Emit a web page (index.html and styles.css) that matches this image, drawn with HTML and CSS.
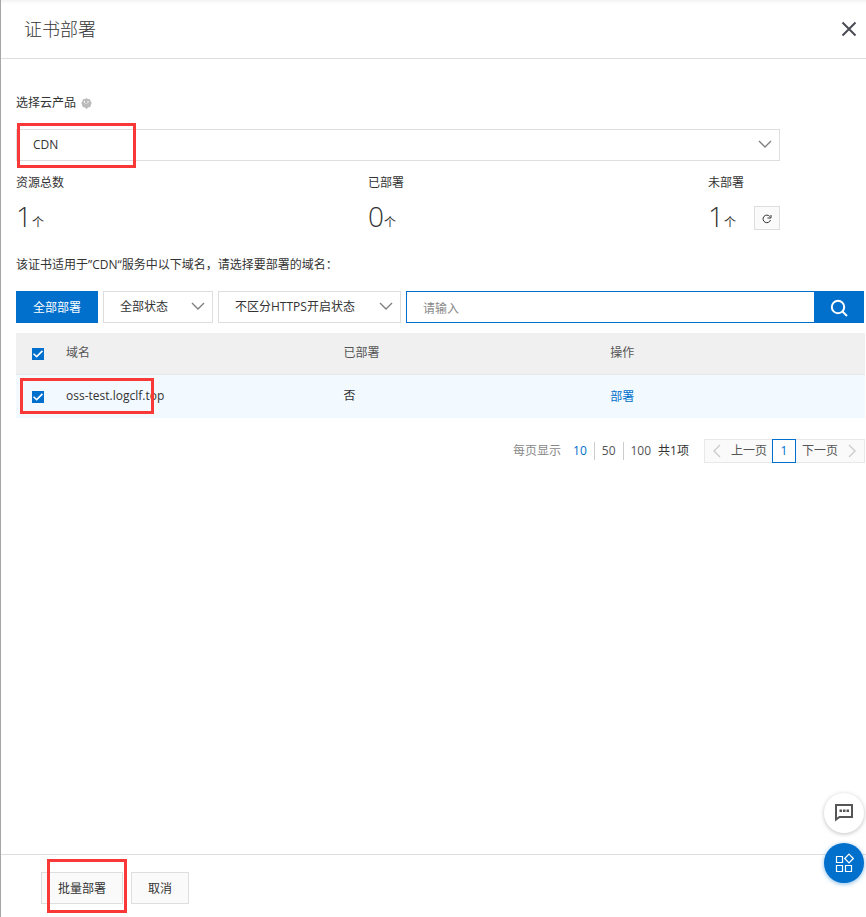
FILE: index.html
```html
<!DOCTYPE html>
<html lang="zh-CN">
<head>
<meta charset="utf-8">
<meta name="viewport" content="width=device-width, initial-scale=1">
<title>证书部署</title>
<link rel="stylesheet" href="styles.css">
</head>
<body>
<div class="drawer">
  <header class="drawer-header">
    <h1 class="drawer-title">证书部署</h1>
    <button class="close" type="button" aria-label="关闭">
      <svg width="16" height="16" viewBox="0 0 16 16"><path d="M1.5 1.5l13 13M14.5 1.5l-13 13"/></svg>
    </button>
  </header>

  <main class="drawer-body">
    <div class="field-label">
      <label for="product">选择云产品</label>
      <svg class="hint" width="11" height="11" viewBox="0 0 11 11"><path class="hint-shape" d="M5.500 0l1.300 1 2.200.2.500 1.900 1.200 1.800-.8 1.900-.4 2-2.300.6L5.500 11l-1.700-1.600-2.300-.6-.4-2-.8-1.900 1.200-1.800.5-1.900L4.200 1z"/><path class="hint-mark" d="M3.500 3v1.500l1 1M7 3v1.500l-1 1"/></svg>
    </div>

    <div class="narrow">
      <div class="select-box">
        <select class="select" id="product"><option>CDN</option></select>
        <svg class="chevron" width="14" height="8" viewBox="0 0 14 8"><path d="M1 1l6 6 6-6"/></svg>
        <span class="mark mark-product"></span>
      </div>
      <div class="stats">
        <div class="stat">
          <div class="stat-name">资源总数</div>
          <div class="stat-value"><span><b>1</b>个</span></div>
        </div>
        <div class="stat">
          <div class="stat-name">已部署</div>
          <div class="stat-value"><span><b>0</b>个</span></div>
        </div>
        <div class="stat stat-last">
          <div class="stat-name">未部署</div>
          <div class="stat-value"><span><b>1</b>个</span>
            <button class="refresh" type="button" aria-label="刷新">
              <svg width="10" height="10" viewBox="0 0 10 10"><path d="M8.500 6A3.800 3.800 0 1 1 7.800 2.500M9 1v3H5.500"/></svg>
            </button>
          </div>
        </div>
      </div>
    </div>

    <p class="intro">该证书适用于”CDN“服务中以下域名，请选择要部署的域名：</p>

    <div class="toolbar">
      <button class="btn btn-primary" type="button">全部部署</button>
      <div class="select-box filter-state">
        <select class="select" aria-label="状态"><option>全部状态</option></select>
        <svg class="chevron" width="14" height="8" viewBox="0 0 14 8"><path d="M1 1l6 6 6-6"/></svg>
      </div>
      <div class="select-box filter-https">
        <select class="select" aria-label="HTTPS"><option>不区分HTTPS开启状态</option></select>
        <svg class="chevron" width="14" height="8" viewBox="0 0 14 8"><path d="M1 1l6 6 6-6"/></svg>
      </div>
      <div class="search">
        <input class="search-input" type="text" placeholder="请输入" aria-label="域名">
        <button class="search-btn" type="button" aria-label="搜索">
          <svg width="18" height="18" viewBox="0 0 18 18"><circle cx="8" cy="8" r="6.200"/><path d="M12.500 12.500L17 17"/></svg>
        </button>
      </div>
    </div>

    <div class="table-wrap">
      <table class="table">
        <colgroup><col class="col-check"><col class="col-domain"><col class="col-status"><col></colgroup>
        <thead>
          <tr><th class="check-cell"><input class="check" type="checkbox" checked aria-label="全选"></th><th>域名</th><th>已部署</th><th>操作</th></tr>
        </thead>
        <tbody>
          <tr><td class="check-cell"><input class="check" id="row1" type="checkbox" checked></td><td><label for="row1">oss-test.logclf.top</label></td><td>否</td><td class="action-cell"><a class="link" href="#">部署</a></td></tr>
        </tbody>
      </table>
      <span class="mark mark-row"></span>
    </div>

    <div class="paging">
      <span class="paging-label">每页显示</span>
      <div class="sizes"><a class="size size-on" href="#">10</a><a class="size" href="#">50</a><a class="size" href="#">100</a></div>
      <span class="total">共1项</span>
      <nav class="pager">
        <button class="page-btn" type="button"><svg width="8" height="14" viewBox="0 0 8 14"><path d="M7 1L1 7l6 6"/></svg>上一页</button>
        <button class="page-num" type="button">1</button>
        <button class="page-btn" type="button">下一页<svg width="8" height="14" viewBox="0 0 8 14"><path d="M1 1l6 6-6 6"/></svg></button>
      </nav>
    </div>
  </main>

  <footer class="drawer-footer">
    <div class="marked">
      <button class="btn" type="button">批量部署</button>
      <span class="mark mark-batch"></span>
    </div>
    <button class="btn" type="button">取消</button>
  </footer>
</div>

<div class="floating">
  <button class="float-btn" type="button" aria-label="反馈">
    <svg width="20" height="20" viewBox="0 0 20 20"><path class="bubble" d="M2 2h16v12H5.500L2 16.500z"/><path class="dots" d="M5.500 6.500h2.500v2.500H5.500zM9 6.500h2.500v2.500H9zM12.500 6.500H15v2.500h-2.500z"/></svg>
  </button>
  <button class="float-btn float-blue" type="button" aria-label="应用">
    <svg width="20" height="20" viewBox="0 0 20 20"><path class="tiles" d="M2.500 3.500h6v6h-6zM2.500 12.500h6v6h-6zM11.500 12.500h6v6h-6zM15 1.200l4.300 4.300L15 9.800l-4.300-4.300z"/></svg>
  </button>
</div>
</body>
</html>
```
FILE: styles.css
```css
* {
  box-sizing: border-box;
}

body {
  margin: 0;
  background: #fff;
  color: #333;
  font-family: "Open Sans", "Noto Sans CJK SC", sans-serif;
  font-size: 12px;
  line-height: 18px;
}

button,
input,
select {
  margin: 0;
  font: inherit;
  color: inherit;
}

button {
  padding: 0;
  cursor: pointer;
}

svg {
  display: block;
  flex: none;
  fill: none;
  stroke: currentColor;
}

a {
  color: inherit;
  text-decoration: none;
}

.drawer {
  display: flex;
  flex-direction: column;
  min-height: 100vh;
  border-left: 1px solid #a6a6a6;
  background: linear-gradient(#f3f3f3, #fff 4px);
}

.drawer-header {
  display: flex;
  align-items: center;
  justify-content: space-between;
  height: 59px;
  padding: 0 9px 0 23px;
  border-bottom: 1px solid #dedede;
}

.drawer-title {
  margin: 0;
  font-size: 18px;
  font-weight: 300;
  line-height: 24px;
}

.close {
  border: 0;
  background: none;
  color: #4a4b55;
}

.close svg {
  stroke-width: 2;
}

.drawer-body {
  flex: 1;
  padding: 35px 1px 0 15px;
}

.field-label {
  display: flex;
  align-items: center;
  gap: 5px;
  margin-bottom: 17px;
}

.hint-shape {
  fill: #bbb;
  stroke: none;
}

.hint-mark {
  stroke: #fff;
}

.narrow {
  width: 90%;
}

.select-box {
  position: relative;
}

.select {
  display: block;
  width: 100%;
  height: 32px;
  padding: 0 32px 0 16px;
  border: 1px solid #dedede;
  border-radius: 0;
  background: #fff;
  appearance: none;
}

.chevron {
  position: absolute;
  top: 11px;
  right: 8px;
  color: #808080;
  stroke-width: 1.4;
  pointer-events: none;
}

.mark {
  position: absolute;
  border: 3px solid #f93838;
  pointer-events: none;
}

.mark-product {
  top: -6px;
  left: 1px;
  width: 119px;
  height: 45px;
}

.mark-row {
  top: 45px;
  left: 4px;
  width: 134px;
  height: 36px;
}

.mark-batch {
  top: -13px;
  left: 6px;
  width: 80px;
  height: 54px;
}

.stats {
  display: flex;
  justify-content: space-between;
  margin-top: 13px;
}

.stat-last {
  width: 72px;
}

.stat-value {
  display: flex;
  align-items: center;
  justify-content: space-between;
  height: 24px;
  margin-top: 14px;
}

.stat b {
  font-size: 28px;
  font-weight: 300;
  line-height: 24px;
}

.refresh {
  display: grid;
  place-items: center;
  width: 26px;
  height: 24px;
  padding-top: 2px;
  border: 1px solid #dedede;
  background: #fafafa;
}

.intro {
  margin: 26px 0 17px;
}

.toolbar {
  display: flex;
  gap: 5px;
  padding-right: 1px;
}

.btn {
  height: 32px;
  padding: 2px 16px 0;
  border: 1px solid #dedede;
  background: #fafafa;
}

.btn-primary {
  border-color: #0070cc;
  background: #0070cc;
  color: #fff;
}

.filter-state {
  width: 110px;
}

.filter-https {
  width: 183px;
}

.search {
  display: flex;
  flex: 1;
}

.search-input {
  flex: 1;
  min-width: 0;
  height: 32px;
  padding: 2px 16px 0;
  border: 1px solid #0070cc;
  border-right: 0;
  border-radius: 0;
  outline: 0;
}

.search-input::placeholder {
  color: #888;
}

.search-btn {
  display: grid;
  place-items: center;
  width: 50px;
  padding-top: 2px;
  border: 0;
  background: #0070cc;
  color: #fff;
}

.search-btn svg {
  stroke-width: 2;
}

.table-wrap {
  position: relative;
  margin-top: 10px;
}

.table {
  width: 100%;
  border-collapse: collapse;
  table-layout: fixed;
}

.col-check {
  width: 34px;
}

.col-domain {
  width: 32.7%;
}

.col-status {
  width: 31.4%;
}

.table th,
.table td {
  height: 44px;
  padding: 0 0 0 16px;
  text-align: left;
  font-weight: 400;
  vertical-align: middle;
}

.table th {
  height: 41px;
  border-bottom: 1px solid #e8e8e8;
  background: #f0f0f0;
  color: #555;
}

.table td {
  background: #f2f9ff;
}

.table .check-cell,
.table .action-cell {
  padding-top: 2px;
}

.check {
  display: block;
  width: 12px;
  height: 12px;
  border: 1px solid #0070cc;
  border-radius: 0;
  background: #fff;
  appearance: none;
}

.check:checked {
  border: 0;
  background: #0070cc;
}

.check:checked::after {
  content: "";
  display: block;
  width: 12px;
  height: 12px;
  background: #fff;
  clip-path: polygon(8% 50%, 17% 41%, 39% 61%, 82% 17%, 92% 27%, 39% 80%);
}

.link {
  color: #0070cc;
}

.paging {
  display: flex;
  align-items: center;
  justify-content: flex-end;
  margin-top: 21px;
}

.paging-label {
  color: #888;
}

.sizes {
  display: flex;
  margin-left: 5px;
}

.size {
  padding: 0 7px;
  color: #555;
}

.size + .size {
  border-left: 1px solid #ccc;
}

.size-on {
  color: #0070cc;
}

.total {
  margin-right: 15px;
}

.pager {
  display: flex;
  height: 24px;
  background: #fafafa;
}

.page-btn {
  display: flex;
  align-items: center;
  gap: 10px;
  padding: 0 5px 0 8px;
  border: 1px solid #e8e8e8;
  border-right: 0;
  background: none;
  color: #555;
}

.page-btn:last-child {
  padding: 0 8px 0 6px;
  border-right: 1px solid #e8e8e8;
  border-left: 0;
}

.page-btn svg {
  color: #ccc;
  stroke-width: 1.4;
}

.page-num {
  width: 24px;
  border: 1px solid #0070cc;
  background: #fff;
  color: #0070cc;
}

.drawer-footer {
  display: flex;
  gap: 8px;
  padding: 17px 40px 13px;
  border-top: 1px solid #dedede;
}

.marked {
  position: relative;
}

.floating {
  position: fixed;
  right: 2px;
  bottom: 34px;
  display: grid;
  gap: 10px;
}

.float-btn {
  display: grid;
  place-items: center;
  width: 40px;
  height: 40px;
  border: 0;
  border-radius: 50%;
  background: #fff;
  color: #555;
  box-shadow: 0 1px 4px rgba(0, 0, 0, 0.25);
}

.float-blue {
  background: #0070cc;
  color: #fff;
  box-shadow: 0 1px 4px rgba(0, 112, 204, 0.5);
}

.bubble {
  stroke-width: 2;
}

.dots {
  fill: currentColor;
  stroke: none;
}

.tiles {
  stroke-width: 1.2;
}
```
